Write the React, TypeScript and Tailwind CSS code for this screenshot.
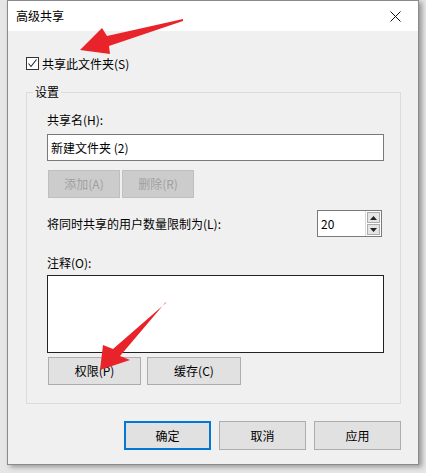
const font = "font-['Microsoft_YaHei','Noto_Sans_CJK_SC',sans-serif]"

type BtnProps = {
    label: string
    width?: string
    disabled?: boolean
    primary?: boolean
}

const Btn: React.FC<BtnProps> = ({ label, width = 'w-[87px]', disabled, primary }) => {
    let cls = 'bg-[#e1e1e1] border border-[#adadad] text-black'
    if (disabled) cls = 'bg-[#cccccc] border border-[#bfbfbf] text-[#a0a0a0]'
    if (primary) cls = 'bg-[#e1e1e1] border-2 border-[#0078d7] text-black'
    return (
        <div className={`${width} h-full flex items-center justify-center text-[12px] leading-[16px] ${cls}`}>
            {label}
        </div>
    )
}

const Arrows = () => (
    <svg className="absolute left-0 top-0 pointer-events-none" width="426" height="473">
        <polygon
            fill="#e8232a"
            points="183,19 107,36 102,28 80,50 110,54 109,46 183,21"
        />
        <polygon
            fill="#e8232a"
            points="167,302 113,349 103,345 100,370 130,360 120,356 165,303"
        />
    </svg>
)

export default function App() {
    return (
        <div className={`relative w-[426px] h-[473px] bg-[#e6e6e6] overflow-hidden text-black ${font}`}>
            <div className="ml-[7px] w-[412px] h-[465px] border border-[#8a8a8a] bg-[#f0f0f0] shadow-[3px_2px_5px_rgba(0,0,0,0.35)] flex flex-col">
                {/* title bar */}
                <div className="h-[30px] bg-white flex items-center justify-between pl-[8px]">
                    <span className="text-[12px] leading-[16px]">高级共享</span>
                    <div className="w-[46px] h-full flex items-center justify-center">
                        <svg width="11" height="11" viewBox="0 0 11 11">
                            <path d="M0.5 0.5 L10.5 10.5 M10.5 0.5 L0.5 10.5" stroke="#111" strokeWidth="1" />
                        </svg>
                    </div>
                </div>

                {/* share checkbox */}
                <div className="mt-[26px] ml-[18px] flex items-center gap-[3px] h-[13px]">
                    <div className="w-[13px] h-[13px] border border-[#333] bg-white flex items-center justify-center">
                        <svg width="11" height="11" viewBox="0 0 11 11">
                            <path d="M1.5 5.5 L4 8.5 L9.5 1.5" stroke="#222" strokeWidth="1.1" fill="none" />
                        </svg>
                    </div>
                    <span className="text-[12px] leading-[16px]">共享此文件夹(S)</span>
                </div>

                {/* settings group */}
                <div className="relative mt-[22px] ml-[18px] w-[375px] border border-[#dcdcdc] pl-[20px] pr-[16px] pt-[19px] pb-[18px] flex flex-col">
                    <span className="absolute -top-[9px] left-[6px] px-[2px] bg-[#f0f0f0] text-[12px] leading-[16px]">设置</span>

                    <span className="text-[12px] leading-[16px]">共享名(H):</span>
                    <div className="mt-[6px] h-[27px] border border-[#7a7a7a] bg-white flex items-center pl-[3px] text-[12px] leading-[16px]">
                        新建文件夹 (2)
                    </div>

                    <div className="mt-[9px] h-[28px] flex gap-[2px] pl-[1px]">
                        <Btn label="添加(A)" width="w-[72px]" disabled />
                        <Btn label="删除(R)" width="w-[72px]" disabled />
                    </div>

                    <div className="mt-[12px] h-[27px] flex items-center justify-between">
                        <span className="text-[12px] leading-[16px]">将同时共享的用户数量限制为(L):</span>
                        <div className="mr-[2px] w-[65px] h-full border border-[#7a7a7a] bg-white flex">
                            <span className="flex-1 flex items-center pl-[3px] text-[12px] leading-[16px]">20</span>
                            <div className="w-[16px] flex flex-col gap-[1px] p-[1px] border-l border-[#d9d9d9]">
                                <div className="flex-1 bg-[#e5e5e5] border border-[#acacac] flex items-center justify-center">
                                    <svg width="7" height="4" viewBox="0 0 7 4"><path d="M0 4 L3.5 0 L7 4 Z" fill="#222" /></svg>
                                </div>
                                <div className="flex-1 bg-[#e5e5e5] border border-[#acacac] flex items-center justify-center">
                                    <svg width="7" height="4" viewBox="0 0 7 4"><path d="M0 0 L3.5 4 L7 0 Z" fill="#222" /></svg>
                                </div>
                            </div>
                        </div>
                    </div>

                    <span className="mt-[18px] text-[12px] leading-[16px]">注释(O):</span>
                    <div className="mt-[4px] h-[78px] border border-[#222] bg-white"></div>

                    <div className="mt-[4px] h-[28px] flex gap-[6px] pl-[1px]">
                        <Btn label="权限(P)" width="w-[93px]" />
                        <Btn label="缓存(C)" width="w-[94px]" />
                    </div>
                </div>

                {/* dialog buttons */}
                <div className="mt-[17px] h-[29px] flex justify-end gap-[8px] pr-[17px]">
                    <Btn label="确定" primary />
                    <Btn label="取消" />
                    <Btn label="应用" />
                </div>
            </div>
            <Arrows />
        </div>
    )
}
